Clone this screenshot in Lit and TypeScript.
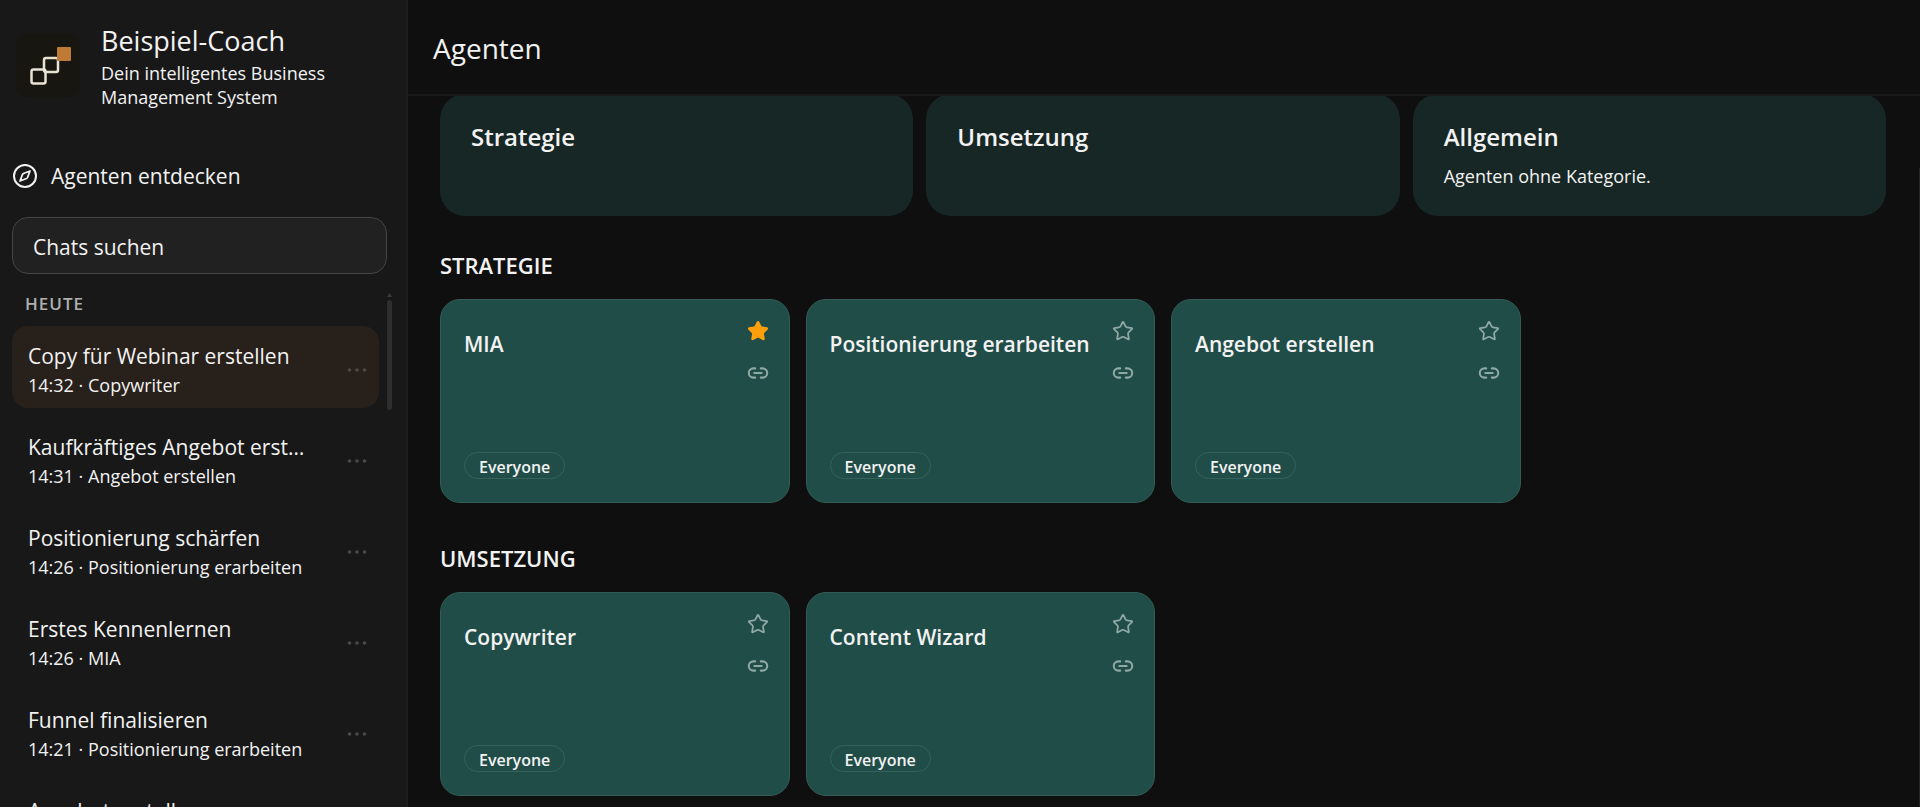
import { LitElement, html, css } from "lit";
import { customElement, state } from "lit/decorators.js";

interface Chat { title: string; time: string; agent: string; }
interface Agent { name: string; starred?: boolean; }
interface Section { title: string; agents: Agent[]; }
interface Category { title: string; text?: string; }

const CHATS: Chat[] = [
  { title: "Copy für Webinar erstellen", time: "14:32", agent: "Copywriter" },
  { title: "Kaufkräftiges Angebot erstellen", time: "14:31", agent: "Angebot erstellen" },
  { title: "Positionierung schärfen", time: "14:26", agent: "Positionierung erarbeiten" },
  { title: "Erstes Kennenlernen", time: "14:26", agent: "MIA" },
  { title: "Funnel finalisieren", time: "14:21", agent: "Positionierung erarbeiten" },
  { title: "Angebot erstellen", time: "14:18", agent: "Angebot erstellen" },
];

const CATEGORIES: Category[] = [
  { title: "Strategie" },
  { title: "Umsetzung" },
  { title: "Allgemein", text: "Agenten ohne Kategorie." },
];

const SECTIONS: Section[] = [
  { title: "Strategie", agents: [{ name: "MIA", starred: true }, { name: "Positionierung erarbeiten" }, { name: "Angebot erstellen" }] },
  { title: "Umsetzung", agents: [{ name: "Copywriter" }, { name: "Content Wizard" }] },
];

const STAR = "M11.525 2.295a.53.53 0 0 1 .95 0l2.31 4.679a2.123 2.123 0 0 0 1.595 1.16l5.166.756a.53.53 0 0 1 .294.904l-3.736 3.638a2.123 2.123 0 0 0-.611 1.878l.882 5.14a.53.53 0 0 1-.771.56l-4.618-2.428a2.122 2.122 0 0 0-1.973 0L6.396 21.01a.53.53 0 0 1-.77-.56l.881-5.139a2.122 2.122 0 0 0-.611-1.879L2.16 9.795a.53.53 0 0 1 .294-.906l5.165-.755a2.122 2.122 0 0 0 1.597-1.16z";

@customElement("agent-card")
export class AgentCard extends LitElement {
  static properties = { name: {}, starred: { type: Boolean } };
  declare name: string;
  declare starred: boolean;

  static styles = css`
    :host { display: block; }
    .card {
      box-sizing: border-box; height: 204px; padding: 19px 19px 23px 23px;
      display: flex; justify-content: space-between; gap: 8px;
      background: #204d48; border: 1px solid #325c55; border-radius: 20px;
    }
    .body { display: flex; flex-direction: column; justify-content: space-between; align-items: flex-start; min-width: 0; }
    h3 { margin: 10px 0 0; font-size: 21px; line-height: 30px; font-weight: 600; color: #f2f2f2; white-space: nowrap; }
    .pill {
      box-sizing: border-box; height: 27px; padding: 0 14px; overflow: hidden;
      border: 1px solid #33625b; border-radius: 14px;
      font-size: 16px; line-height: 28px; font-weight: 600; color: #f2f2f2;
    }
    .actions { display: flex; flex-direction: column; gap: 18px; }
    button { display: block; width: 24px; height: 24px; padding: 0; border: 0; background: none; color: #8fa9a5; cursor: pointer; }
    svg { display: block; width: 24px; height: 24px; fill: none; stroke: currentColor; stroke-linecap: round; stroke-linejoin: round; }
    .starred { color: #ff9f0a; }
    .starred svg { fill: currentColor; }
  `;

  render() {
    return html`<article class="card">
      <div class="body"><h3>${this.name}</h3><span class="pill">Everyone</span></div>
      <div class="actions">
        <button class=${this.starred ? "starred" : ""} aria-label="Favorit" @click=${() => (this.starred = !this.starred)}>
          <svg viewBox="-1 -1 26 26" stroke-width="1.900"><path d=${STAR} /></svg>
        </button>
        <button aria-label="Link kopieren">
          <svg viewBox="-1 -1 26 26" stroke-width="2.200"><path d="M9 17H7A5 5 0 0 1 7 7h2M15 7h2a5 5 0 1 1 0 10h-2M8 12h8" /></svg>
        </button>
      </div>
    </article>`;
  }
}

@customElement("app-root")
export class AppRoot extends LitElement {
  @state() selected = 0;

  static styles = css`
    :host {
      display: grid; grid-template-columns: 408px minmax(0, 1fr); height: 100vh; overflow: hidden;
      background: #0f0f0f; color: #f2f2f2; font-family: "Open Sans", "Noto Sans", sans-serif;
    }
    h1, h2, p { margin: 0; font-weight: 400; }
    button { font: inherit; color: inherit; background: none; border: 0; padding: 0; cursor: pointer; text-align: left; }
    .sidebar {
      box-sizing: border-box; display: flex; flex-direction: column; min-height: 0; overflow: hidden;
      background: #181818; border-right: 2px solid #1c1c1c; padding: 21px 12px 0;
    }
    .brand { display: flex; align-items: center; gap: 21px; padding-left: 4px; }
    .logo { flex: none; width: 64px; height: 64px; }
    .brand h1 { font-size: 27px; line-height: 40px; }
    .brand p { font-size: 18px; line-height: 24px; }
    .discover { display: flex; align-items: center; gap: 14px; margin-top: 50px; padding-left: 1px; font-size: 21px; line-height: 34px; color: inherit; text-decoration: none; }
    .discover svg { width: 24px; height: 24px; fill: none; stroke: currentColor; stroke-linejoin: round; }
    .search {
      box-sizing: border-box; width: 375px; height: 57px; margin-top: 24px; padding: 2px 20px 0; flex: none;
      background: #212121; border: 1px solid #454545; border-radius: 16px; outline: 0;
      font: inherit; font-size: 21px; color: #f2f2f2;
    }
    .search::placeholder { color: #f2f2f2; opacity: 1; }
    .history { display: flex; justify-content: space-between; flex: 1; min-height: 0; margin-top: 16px; }
    .list { width: 367px; }
    .day { padding-left: 13px; font-size: 17px; line-height: 28px; font-weight: 600; letter-spacing: 1px; color: #b0b0b0; margin-bottom: 8px; }
    .chats { display: flex; flex-direction: column; gap: 9px; }
    .chat { box-sizing: border-box; width: 100%; height: 82px; padding: 5px 12px 0 16px; display: flex; align-items: center; border-radius: 16px; }
    .active { background: #28201a; }
    .open { flex: 1; min-width: 0; padding-right: 36px; }
    .title { display: block; font-size: 21px; line-height: 30px; white-space: nowrap; overflow: hidden; text-overflow: ellipsis; }
    .meta { display: block; font-size: 18px; line-height: 28px; white-space: nowrap; }
    .more svg { display: block; width: 20px; height: 8px; fill: #4c4a48; }
    .bar { width: 5px; margin-right: 2px; display: flex; flex-direction: column; gap: 3px; padding-top: 3px; }
    .bar svg { display: block; width: 5px; height: 4px; fill: #3c3c3c; }
    .thumb { width: 5px; height: 110px; border-radius: 3px; background: #2e2e2e; }
    .main { display: flex; flex-direction: column; min-width: 0; min-height: 0; }
    .top { box-sizing: border-box; flex: none; height: 96px; padding: 2px 25px 0; display: flex; align-items: center; border-bottom: 2px solid #191919; }
    .top h1 { font-size: 28px; line-height: 40px; }
    .pane { display: flex; flex: 1; min-height: 0; overflow: hidden; }
    .content { flex: 1; min-width: 0; padding: 0 33px 0 32px; }
    .rail { flex: none; width: 1px; margin-top: 72px; background: #232323; }
    .categories { display: grid; grid-template-columns: repeat(3, 1fr); gap: 13px; margin-top: -2px; }
    .category { box-sizing: border-box; height: 122px; padding: 25px 31px; background: #172725; border-radius: 25px; }
    .category h2 { font-size: 24px; line-height: 36px; font-weight: 600; }
    .category p { font-size: 18px; line-height: 28px; margin-top: 7px; }
    .section { margin-top: 33px; }
    .section > h2 { font-size: 22px; line-height: 32px; font-weight: 600; text-transform: uppercase; margin-bottom: 18px; }
    .section + .section { margin-top: 39px; }
    .cards { display: grid; grid-template-columns: repeat(4, 1fr); gap: 16px; }
  `;

  render() {
    return html`
      <aside class="sidebar">
        <div class="brand">
          <svg class="logo" viewBox="0 0 64 64" aria-hidden="true">
            <rect width="64" height="64" rx="12" fill="#171611" />
            <g fill="none" stroke="#e9e3d3" stroke-width="2.500"><rect x="15.500" y="36.500" width="14" height="14" rx="2" /><rect x="28" y="25" width="14" height="14" rx="2" /></g>
            <rect x="41" y="14" width="14" height="14" rx="1" fill="#c07a38" />
          </svg>
          <div><h1>Beispiel-Coach</h1><p>Dein intelligentes Business Management System</p></div>
        </div>
        <a class="discover" href="#entdecken">
          <svg viewBox="0 0 24 24" aria-hidden="true"><circle cx="12" cy="12" r="11" stroke-width="2" /><path d="M17 7l-2.500 6.500a2 2 0 0 1-1 1L7 17l2.500-6.500a2 2 0 0 1 1-1z" stroke-width="1.800" /></svg>
          Agenten entdecken
        </a>
        <input class="search" type="search" aria-label="Chats suchen" placeholder="Chats suchen" />
        <div class="history">
          <div class="list">
            <div class="day">HEUTE</div>
            <div class="chats">
              ${CHATS.map((c, i) => html`<div class="chat ${i === this.selected ? "active" : ""}">
                <button class="open" @click=${() => (this.selected = i)}>
                  <span class="title">${c.title}</span><span class="meta">${c.time} · ${c.agent}</span>
                </button>
                <button class="more" aria-label="Mehr"><svg viewBox="0 0 20 8"><circle cx="2.500" cy="4" r="1.800" /><circle cx="10" cy="4" r="1.800" /><circle cx="17.500" cy="4" r="1.800" /></svg></button>
              </div>`)}
            </div>
          </div>
          <div class="bar"><svg viewBox="0 0 5 4"><path d="M2.500 0L5 4H0z" /></svg><div class="thumb"></div></div>
        </div>
      </aside>
      <main class="main">
        <header class="top"><h1>Agenten</h1></header>
        <div class="pane">
          <div class="content">
            <div class="categories">
              ${CATEGORIES.map((c) => html`<div class="category"><h2>${c.title}</h2>${c.text ? html`<p>${c.text}</p>` : ""}</div>`)}
            </div>
            ${SECTIONS.map((s) => html`<section class="section"><h2>${s.title}</h2>
              <div class="cards">${s.agents.map((a) => html`<agent-card .name=${a.name} .starred=${!!a.starred}></agent-card>`)}</div>
            </section>`)}
          </div>
          <div class="rail"></div>
        </div>
      </main>`;
  }
}
